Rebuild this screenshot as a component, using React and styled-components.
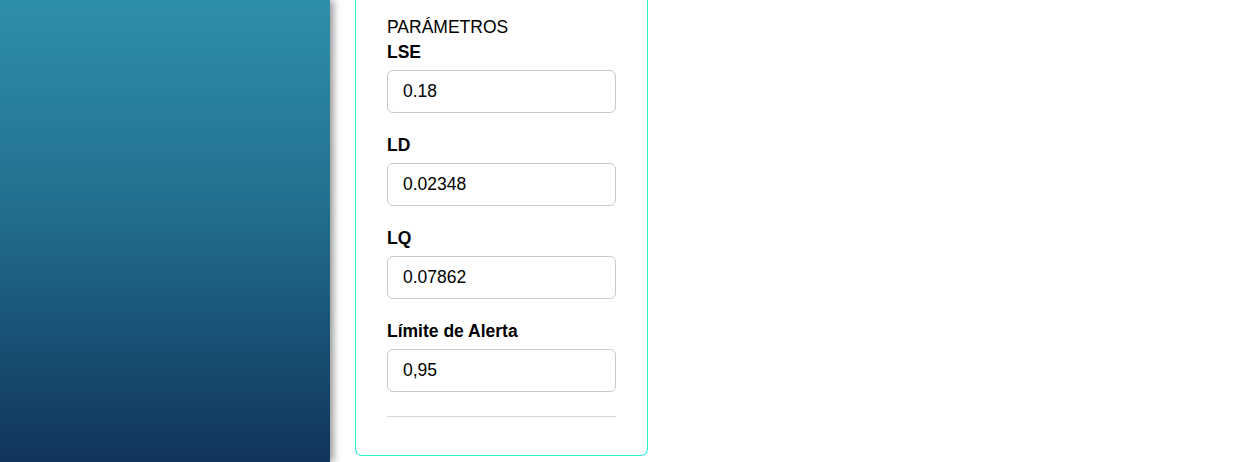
import React from 'react';
import styled, { createGlobalStyle } from 'styled-components';

const GlobalStyle = createGlobalStyle`
  html, body {
    margin: 0;
    padding: 0;
    background: #ffffff;
    font-family: "Liberation Sans", Arial, sans-serif;
    color: #000;
  }
`;

const Layout = styled.div`
  display: flex;
  height: 462px;
  overflow: hidden;
`;

const Sidebar = styled.aside`
  width: 330px;
  flex-shrink: 0;
  background: linear-gradient(180deg, #2f8faa 0%, #226f8e 45%, #10345a 100%);
  box-shadow: 3px 0 8px rgba(0, 0, 0, 0.45);
  position: relative;
  z-index: 1;
`;

const Main = styled.main`
  flex: 1;
  padding-left: 25px;
  display: flex;
  align-items: flex-end;
  padding-bottom: 6px;
`;

const Card = styled.section`
  width: 293px;
  flex-shrink: 0;
  border: 1px solid #25f0d2;
  border-top: none;
  border-radius: 0 0 7px 7px;
  padding: 15px 31px 38px 31px;
  box-sizing: border-box;
  display: flex;
  flex-direction: column;
`;

const Heading = styled.div`
  font-size: 17.5px;
  line-height: 24px;
  margin-bottom: 1px;
  text-transform: uppercase;
`;

const Field = styled.div`
  display: flex;
  flex-direction: column;
  margin-bottom: ${p => (p.last ? '24px' : '20px')};
`;

const Label = styled.label`
  font-size: 17.5px;
  font-weight: 700;
  line-height: 24px;
  margin-bottom: 6px;
`;

const Input = styled.input`
  height: 43px;
  box-sizing: border-box;
  border: 1px solid #c9c9c9;
  border-radius: 6px;
  padding: 0 15px;
  font-family: "Liberation Sans", Arial, sans-serif;
  font-size: 17.5px;
  color: #000;
  outline: none;
`;

const Divider = styled.hr`
  margin: 0;
  border: none;
  border-top: 1px solid #d6d6d6;
`;

const params = [
  { label: 'LSE', value: '0.18' },
  { label: 'LD', value: '0.02348' },
  { label: 'LQ', value: '0.07862' },
  { label: 'Límite de Alerta', value: '0,95' },
];

export default function App() {
  return (
    <>
      <GlobalStyle />
      <Layout>
        <Sidebar />
        <Main>
          <Card>
            <Heading>Parámetros</Heading>
            {params.map((p, i) => (
              <Field key={p.label} last={i === params.length - 1}>
                <Label>{p.label}</Label>
                <Input defaultValue={p.value} />
              </Field>
            ))}
            <Divider />
          </Card>
        </Main>
      </Layout>
    </>
  );
}
